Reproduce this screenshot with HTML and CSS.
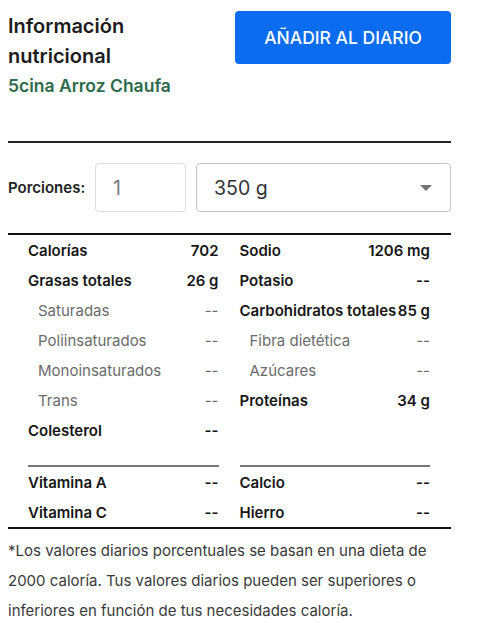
FILE: index.html
```html
<!DOCTYPE html>
<html lang="es">
<head>
<meta charset="utf-8">
<title>Información nutricional</title>
<link rel="stylesheet" href="styles.css">
</head>
<body>
<div class="panel">
  <header class="header">
    <div class="titles">
      <h1 class="title">Información<br>nutricional</h1>
      <div class="subtitle">5cina Arroz Chaufa</div>
    </div>
    <button class="add-btn">AÑADIR AL DIARIO</button>
  </header>
  <div class="rule"></div>
  <div class="servings">
    <span class="servings-label">Porciones:</span>
    <div class="field qty">1</div>
    <div class="field unit">
      <span>350 g</span>
      <svg class="caret" width="12" height="6" viewBox="0 0 12 6"><path d="M0 0h12L6 6z" fill="#757575"/></svg>
    </div>
  </div>
  <div class="facts">
    <div class="cols">
      <div class="col">
        <div class="row"><span>Calorías</span><span>702</span></div>
        <div class="row"><span>Grasas totales</span><span>26 g</span></div>
        <div class="row sub"><span>Saturadas</span><span>--</span></div>
        <div class="row sub"><span>Poliinsaturados</span><span>--</span></div>
        <div class="row sub"><span>Monoinsaturados</span><span>--</span></div>
        <div class="row sub"><span>Trans</span><span>--</span></div>
        <div class="row"><span>Colesterol</span><span>--</span></div>
      </div>
      <div class="col">
        <div class="row"><span>Sodio</span><span>1206 mg</span></div>
        <div class="row"><span>Potasio</span><span>--</span></div>
        <div class="row"><span>Carbohidratos totales</span><span>85 g</span></div>
        <div class="row sub"><span>Fibra dietética</span><span>--</span></div>
        <div class="row sub"><span>Azúcares</span><span>--</span></div>
        <div class="row"><span>Proteínas</span><span>34 g</span></div>
      </div>
    </div>
    <div class="cols vitamins">
      <div class="col">
        <div class="row"><span>Vitamina A</span><span>--</span></div>
        <div class="row"><span>Vitamina C</span><span>--</span></div>
      </div>
      <div class="col">
        <div class="row"><span>Calcio</span><span>--</span></div>
        <div class="row"><span>Hierro</span><span>--</span></div>
      </div>
    </div>
  </div>
  <p class="note">*Los valores diarios porcentuales se basan en una dieta de 2000 caloría. Tus valores diarios pueden ser superiores o inferiores en función de tus necesidades caloría.</p>
</div>
</body>
</html>
```

FILE: styles.css
```css
* { box-sizing: border-box; }
html, body { margin: 0; padding: 0; background: #fff; }
body {
  padding: 8px;
  font-family: Inter, "Noto Sans", "Liberation Sans", sans-serif;
  color: #1a1a1a;
}
.panel { width: 443px; }
.header {
  display: flex;
  justify-content: space-between;
  align-items: flex-start;
  padding-top: 3px;
}
.titles { display: flex; flex-direction: column; }
.title {
  margin: 0;
  font-size: 20px;
  line-height: 30px;
  font-weight: 600;
  color: #1c1c1c;
}
.subtitle {
  margin-top: 3px;
  font-size: 17.5px;
  line-height: 24px;
  font-weight: 600;
  color: #2e6a4c;
}
.add-btn {
  width: 216px;
  height: 53px;
  border: 0;
  border-radius: 4px;
  background: #0a6cf0;
  color: #fff;
  font-family: inherit;
  font-size: 17.5px;
  font-weight: 500;
  padding: 0;
}
.rule {
  margin-top: 43px;
  height: 2px;
  background: #222;
}
.servings {
  display: flex;
  align-items: center;
  gap: 10px;
  margin-top: 20px;
}
.servings-label {
  font-size: 15px;
  font-weight: 600;
  color: #222;
  width: 77px;
  white-space: nowrap;
}
.field {
  height: 49px;
  border-radius: 4px;
  display: flex;
  align-items: center;
  padding-left: 17px;
  font-size: 19.5px;
}
.qty {
  width: 91px;
  border: 1px solid #dcdcdc;
  color: #7a7a7a;
}
.unit {
  flex: 1;
  border: 1px solid #c4c4c4;
  color: #333;
  justify-content: space-between;
  padding-right: 18px;
}
.caret { display: block; }
.facts {
  margin-top: 21px;
  border-top: 2px solid #111;
  border-bottom: 2px solid #111;
  padding: 0 21px 0 20px;
}
.cols {
  display: grid;
  grid-template-columns: 1fr 1fr;
  column-gap: 21px;
}
.col { display: flex; flex-direction: column; }
.row {
  display: flex;
  justify-content: space-between;
  align-items: center;
  height: 30px;
  font-size: 15px;
  font-weight: 600;
  color: #161616;
  white-space: nowrap;
}
.row.sub {
  font-weight: 400;
  color: #6b6b6b;
  padding-left: 10px;
}
.vitamins { margin-top: 20px; }
.vitamins .col { border-top: 2px solid #777; }
.vitamins .row { height: 30px; }
.note {
  margin: 7px 0 0;
  font-size: 15px;
  line-height: 30px;
  color: #3a3a3a;
}
```
